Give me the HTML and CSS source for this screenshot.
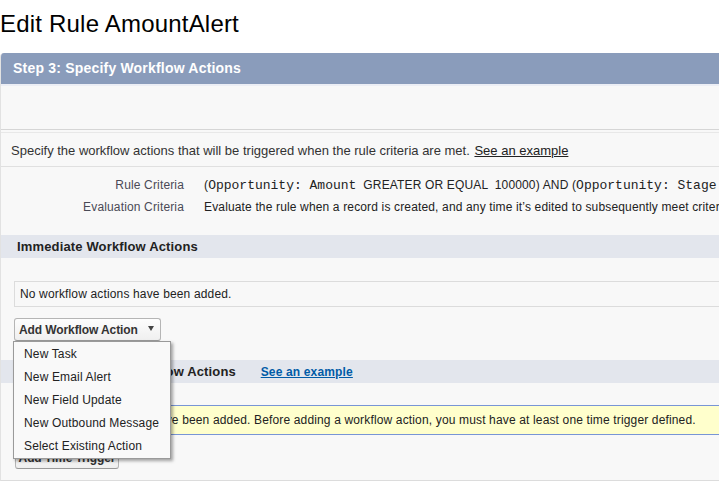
FILE: index.html
```html
<!DOCTYPE html>
<html lang="en">
<head>
  <meta charset="UTF-8">
  <meta name="viewport" content="width=device-width, initial-scale=1.0">
  <title>Edit Rule AmountAlert</title>
  <link rel="stylesheet" href="styles.css">
</head>
<body>

  <h1 class="page-title">Edit Rule AmountAlert</h1>

  <div class="panel">
    <div class="panel-header">Step 3: Specify Workflow Actions</div>
    <div class="panel-top"></div>

    <div class="intro">
      Specify the workflow actions that will be triggered when the rule criteria are met.
      <a href="#" class="plain-link">See an example</a>
    </div>

    <div class="criteria">
      <div class="crit-label">Rule Criteria</div>
      <div class="crit-value">(<span class="mono">Opportunity: Amount</span> &nbsp;GREATER OR EQUAL &nbsp;100000) AND (<span class="mono">Opportunity: Stage</span> EQUALS Closed Won)</div>
      <div class="crit-label">Evaluation Criteria</div>
      <div class="crit-value">Evaluate the rule when a record is created, and any time it’s edited to subsequently meet criteria</div>
    </div>

    <div class="section-head">Immediate Workflow Actions</div>
    <div class="section-body">
      <div class="empty-box">No workflow actions have been added.</div>
      <div class="menu-wrap">
        <button class="btn" id="addActionBtn">Add Workflow Action <span class="caret"></span></button>
        <ul class="menu" id="actionMenu">
          <li>New Task</li>
          <li>New Email Alert</li>
          <li>New Field Update</li>
          <li>New Outbound Message</li>
          <li>Select Existing Action</li>
        </ul>
      </div>
    </div>

    <div class="section-head">Time-Dependent Workflow Actions <a href="#" class="blue-link">See an example</a></div>
    <div class="section-body last">
      <div class="info-box">No workflow actions have been added. Before adding a workflow action, you must have at least one time trigger defined.</div>
      <button class="btn btn-trigger">Add Time Trigger</button>
    </div>
  </div>

</body>
</html>
```

FILE: styles.css
```css
body {
  margin: 0;
  font-family: "Liberation Sans", Arial, sans-serif;
  font-size: 12px;
  letter-spacing: 0.15px;
  color: #333;
  overflow: hidden;
}
.page-title {
  margin: 10px 0 15px 0;
  font-size: 24px;
  line-height: 28px;
  font-weight: normal;
  letter-spacing: 0.2px;
  color: #000;
}
.panel {
  background-color: #f8f8f8;
  border-left: 1px solid #e2e2e2;
  border-bottom: 1px solid #dcdcdc;
  border-top-left-radius: 4px;
  overflow: hidden;
  white-space: nowrap;
}
.panel-header {
  height: 31px;
  line-height: 31px;
  padding-left: 12px;
  background-color: #8a9cbb;
  color: #fff;
  font-size: 14px;
  font-weight: bold;
  letter-spacing: 0.2px;
  border-bottom: 2px solid #eceef5;
}
.panel-top {
  height: 43px;
  border-bottom: 1px solid #d6d6d6;
  margin-bottom: 2px;
}
.intro {
  height: 33px;
  line-height: 35px;
  padding-left: 10px;
  font-size: 13px;
  letter-spacing: 0;
  border-top: 1px solid #e8e8e8;
  border-bottom: 1px solid #e0e0e0;
}
.plain-link {
  color: #222;
  margin-left: 1px;
}
.criteria {
  display: grid;
  grid-template-columns: 183px auto;
  column-gap: 20px;
  padding: 7px 0 17px 0;
}
.crit-label, .crit-value {
  height: 22px;
  line-height: 23px;
}
.crit-label {
  text-align: right;
  color: #4a4a56;
}
.crit-value {
  color: #222;
}
.mono {
  font-family: "Liberation Mono", "Courier New", monospace;
  font-size: 13px;
  letter-spacing: 0;
}
.section-head {
  height: 23px;
  line-height: 23px;
  padding-left: 16px;
  background-color: #e3e6ed;
  color: #222;
  font-size: 13px;
  font-weight: bold;
  letter-spacing: 0.15px;
}
.blue-link {
  color: #015ba7;
  font-size: 12px;
  letter-spacing: 0.15px;
  margin-left: 21px;
}
.section-body {
  padding: 23px 0 19px 13px;
}
.section-body.last {
  padding: 22px 0 11px 13px;
}
.empty-box {
  height: 24px;
  line-height: 25px;
  padding-left: 5px;
  background-color: #f8f8f8;
  border: 1px solid #dcdcdc;
  border-right: none;
  color: #222;
}
.menu-wrap {
  position: relative;
  margin-top: 11px;
  width: 160px;
}
.btn {
  display: inline-flex;
  align-items: center;
  height: 23px;
  padding: 0 5px;
  font-family: "Liberation Sans", Arial, sans-serif;
  font-size: 12px;
  font-weight: bold;
  letter-spacing: -0.1px;
  color: #333;
  background: linear-gradient(#fdfdfd, #efefef);
  border: 1px solid #b5b5b5;
  border-bottom-color: #999;
  border-radius: 3px;
  cursor: pointer;
}
#addActionBtn {
  width: 147px;
  padding: 0 6px 0 4px;
  justify-content: space-between;
}
.caret {
  width: 0;
  height: 0;
  margin-top: -3px;
  border-left: 3px solid transparent;
  border-right: 3px solid transparent;
  border-top: 5px solid #444;
}
.menu {
  position: absolute;
  top: 23px;
  left: -1px;
  width: 156px;
  margin: 0;
  padding: 1px 0 0 0;
  list-style: none;
  background-color: #f9f9f9;
  border: 1px solid #9a9a9a;
  box-shadow: 2px 2px 3px rgba(0, 0, 0, 0.35);
  z-index: 10;
}
.menu li {
  height: 23px;
  line-height: 23px;
  padding-left: 10px;
  color: #222;
}
.info-box {
  height: 28px;
  line-height: 29px;
  padding-left: 24px;
  background-color: #ffffcc;
  border: 1px solid #7895d6;
  border-right: none;
  color: #222;
}
.btn-trigger {
  margin: 11px 0 0 1px;
  width: 104px;
  justify-content: center;
}
```
